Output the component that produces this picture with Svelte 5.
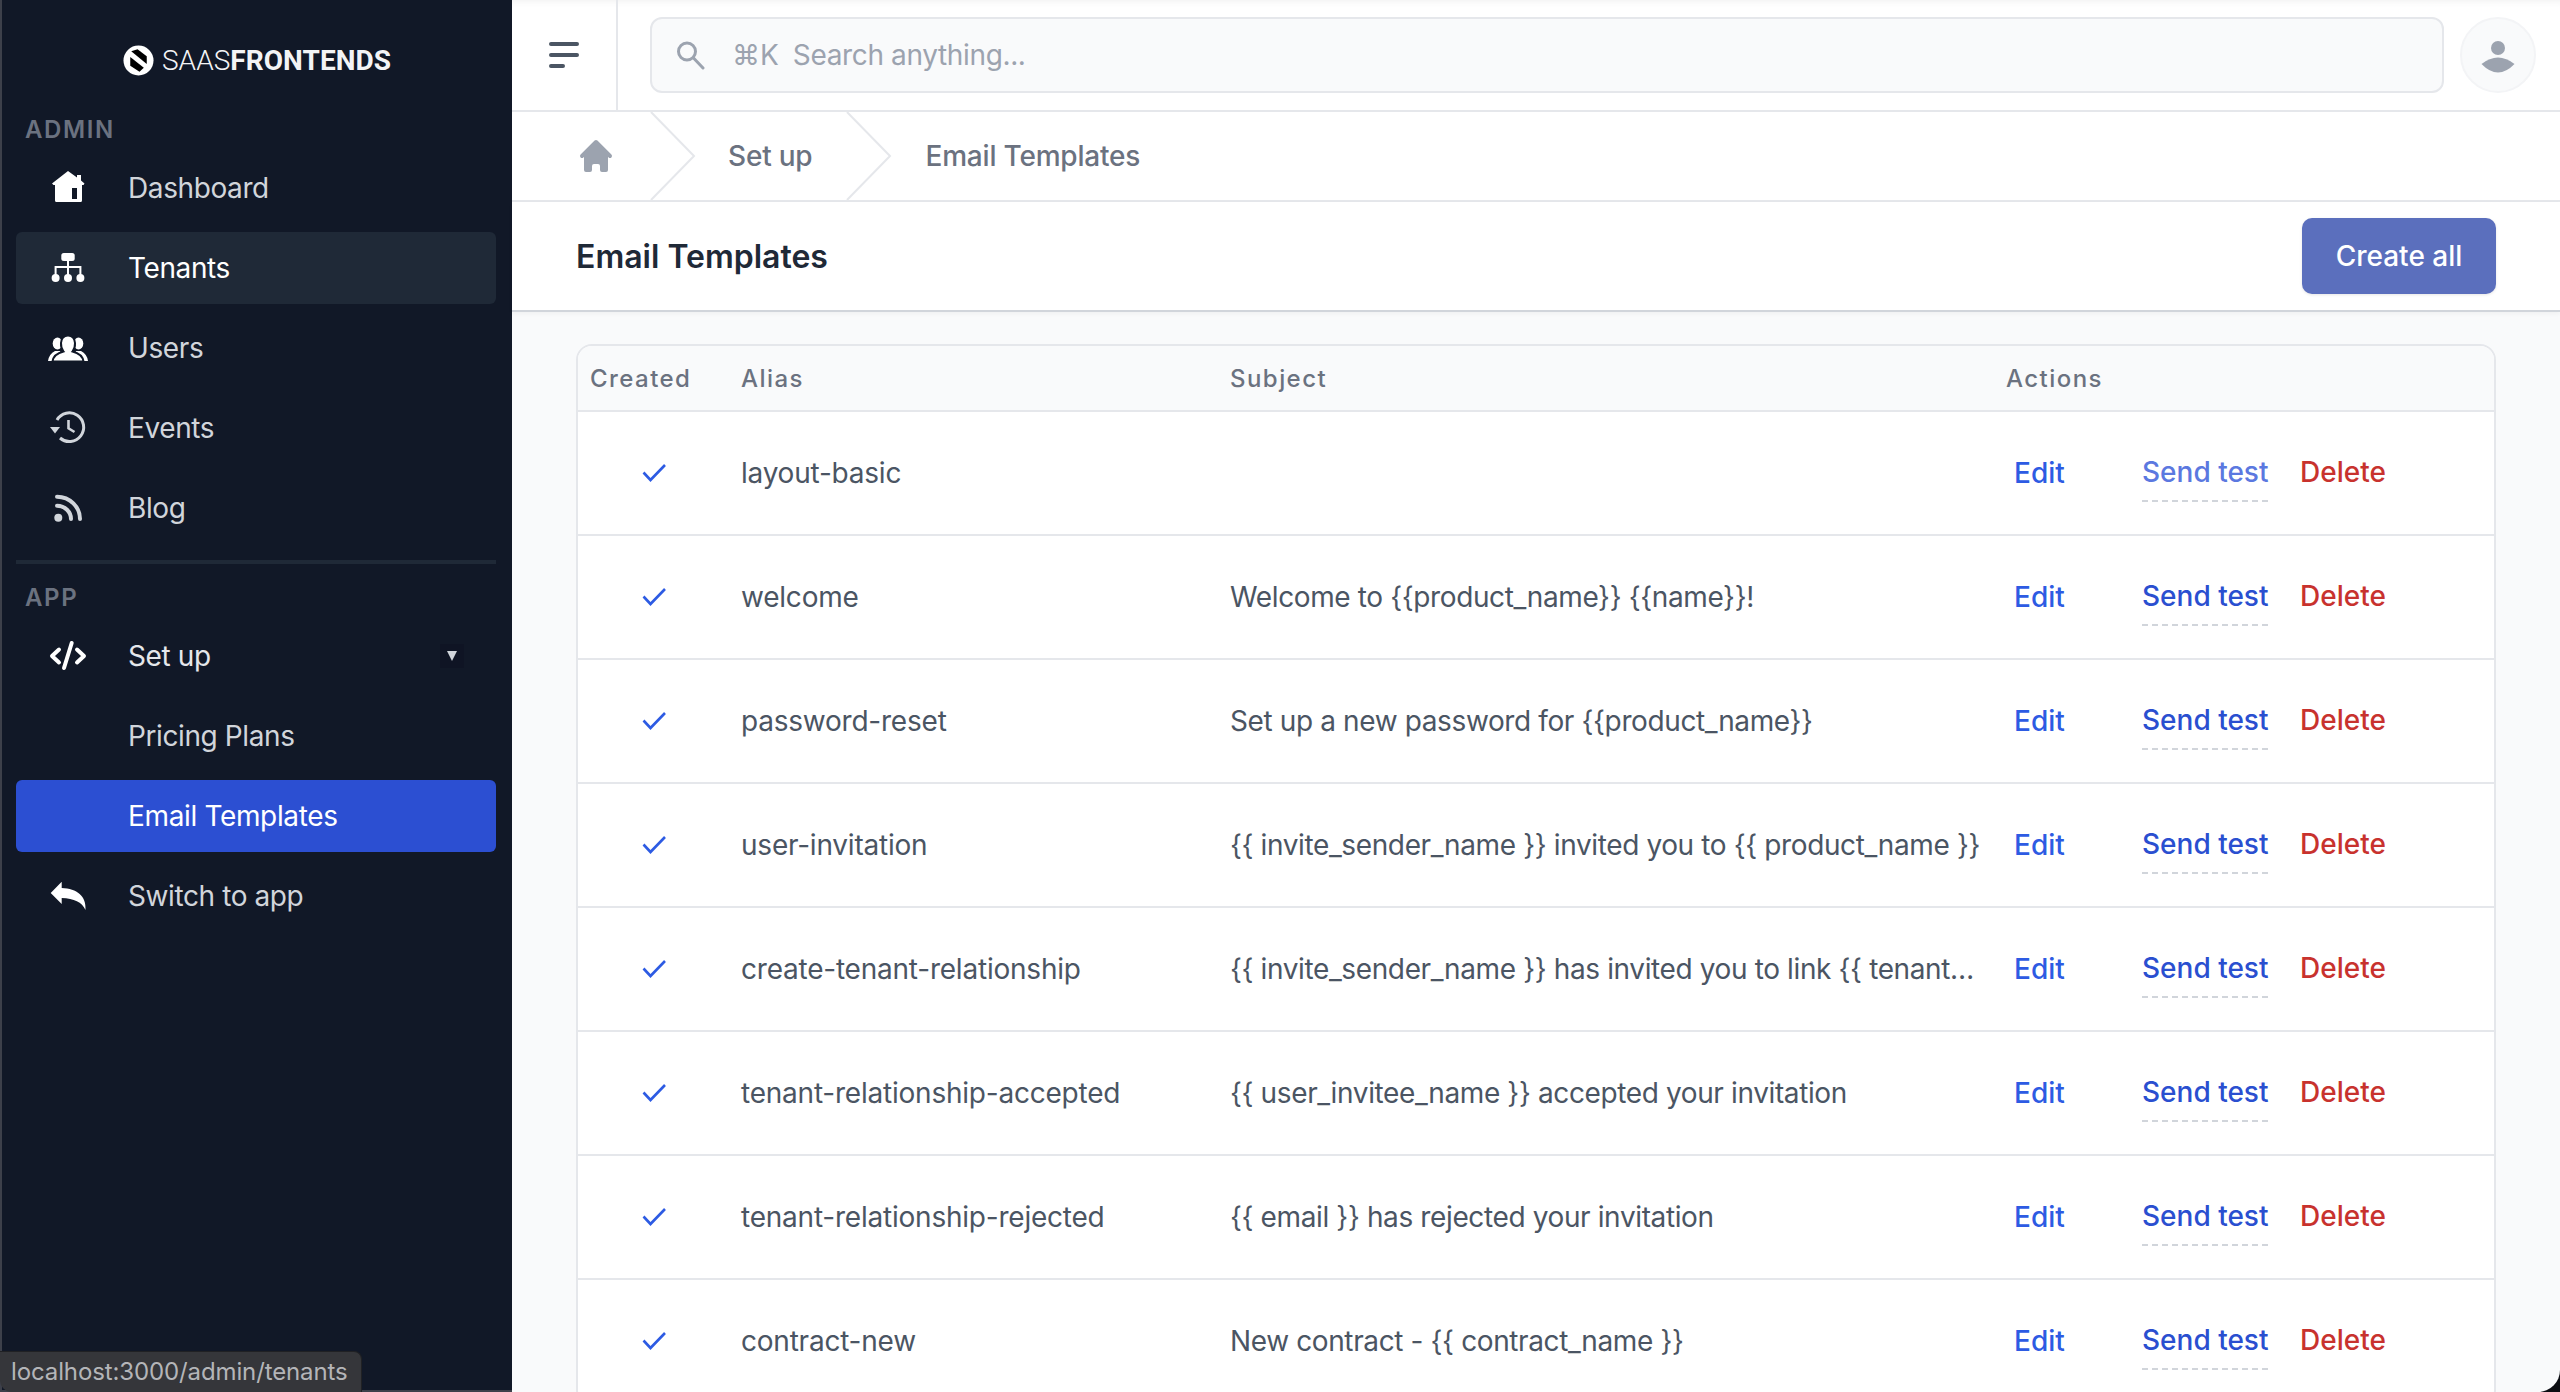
<script>
  // Email templates admin page: dark sidebar, search header, breadcrumb, table.
  const templates = [
    { alias: 'layout-basic', subject: '' },
    { alias: 'welcome', subject: 'Welcome to {{product_name}} {{name}}!' },
    { alias: 'password-reset', subject: 'Set up a new password for {{product_name}}' },
    { alias: 'user-invitation', subject: '{{ invite_sender_name }} invited you to {{ product_name }}' },
    { alias: 'create-tenant-relationship', subject: '{{ invite_sender_name }} has invited you to link {{ tenant…' },
    { alias: 'tenant-relationship-accepted', subject: '{{ user_invitee_name }} accepted your invitation' },
    { alias: 'tenant-relationship-rejected', subject: '{{ email }} has rejected your invitation' },
    { alias: 'contract-new', subject: 'New contract - {{ contract_name }}' }
  ]
</script>

<div class="window">
  <aside class="sidebar">
    <div class="brand">
      <svg class="logo" viewBox="0 0 32 32" width="31" height="31">
        <circle cx="16" cy="16" r="15.5" fill="#fff" />
        <path d="M8.5 6.5 L15 4.5 L24.5 11.5 L24.5 19.5 Z" fill="#000" />
        <path d="M7.5 12.5 L21.5 23.5 L17 27.5 L7.5 21.5 Z" fill="#000" />
      </svg>
      <span class="wordmark"><span class="thin">SAAS</span><b>FRONTENDS</b></span>
    </div>

    <div class="section">ADMIN</div>
    <nav class="menu">
      <a class="item">
        <svg class="ico" viewBox="0 0 40 40" fill="#fff">
          <path fill-rule="evenodd" d="M20 3 L29 9.5 V7 H33 V12.5 L36.5 15.5 L35.5 17 H34 V32.5 Q34 34 32.5 34 H8.5 Q7 34 7 32.5 V17 H5.5 L4 15.5 Z M24 20 V31 H29 V20 Z" />
        </svg>
        Dashboard
      </a>
      <a class="item current">
        <svg class="ico" viewBox="0 0 40 40" fill="#fff">
          <rect x="13.3" y="5" width="13.4" height="8" rx="2.5" />
          <path d="M20 13 V27 M7.6 27 V19 H32.4 V27" fill="none" stroke="#fff" stroke-width="2" />
          <circle cx="7.6" cy="30" r="4" />
          <circle cx="20" cy="30" r="4" />
          <circle cx="32.4" cy="30" r="4" />
        </svg>
        Tenants
      </a>
      <a class="item">
        <svg class="ico" viewBox="0 0 40 40" fill="#fff">
          <ellipse cx="9.5" cy="15.5" rx="4.8" ry="6" />
          <ellipse cx="30.5" cy="15.5" rx="4.8" ry="6" />
          <path d="M0 33 Q1 26 7 23 H12 L16 33 Z M40 33 Q39 26 33 23 H28 L24 33 Z" />
          <path d="M4.5 33.5 Q5.5 26 15.5 23.5 Q12.7 20 13 15 Q13.5 7.5 20 7.5 Q26.5 7.5 27 15 Q27.3 20 24.5 23.5 Q34.5 26 35.5 33.5 Z" stroke="#111827" stroke-width="2" />
        </svg>
        Users
      </a>
      <a class="item">
        <svg class="ico" viewBox="0 0 40 40" fill="none" stroke="#d1d5db" stroke-width="3">
          <path d="M9 12 A14.3 14.3 0 1 1 12 30" />
          <path d="M2 19 H12 L7 25.5 Z" fill="#d1d5db" stroke="none" />
          <path d="M20.5 12 V20.3 L26.5 24" stroke-width="2.6" />
        </svg>
        Events
      </a>
      <a class="item">
        <svg class="ico" viewBox="0 0 40 40" fill="none" stroke="#d1d5db" stroke-width="4" stroke-linecap="round">
          <path d="M9 8.7 C22 8.7 32 19 32 31" />
          <path d="M9 17.8 C17 17.8 23 24 23 31" />
          <circle cx="10.3" cy="29.7" r="4" fill="#d1d5db" stroke="none" />
        </svg>
        Blog
      </a>
    </nav>

    <div class="rule"></div>

    <div class="section app">APP</div>
    <nav class="menu">
      <a class="item open">
        <svg class="ico" viewBox="0 0 40 40" fill="none" stroke="#fff" stroke-width="4" stroke-linecap="round" stroke-linejoin="round">
          <path d="M11 13.5 L4 20 L11 26.5 M29 13.5 L36 20 L29 26.5 M23.7 7 L16 32" />
        </svg>
        Set up
        <span class="caret"><i></i></span>
      </a>
      <a class="item">Pricing Plans</a>
      <a class="item active">Email Templates</a>
      <a class="item">
        <svg class="ico" viewBox="0 0 40 40" fill="#fff">
          <path d="M2.7 17 L13.7 5.7 V12 C29 12.5 38.5 20 37.5 34 C34 26 26 22.5 13.7 22 V28 Z" />
        </svg>
        Switch to app
      </a>
    </nav>
  </aside>

  <main class="main">
    <header class="topbar">
      <button class="burger" aria-label="Menu">
        <svg viewBox="0 0 30 26" width="30" height="26" fill="none" stroke="#4b5563" stroke-width="4" stroke-linecap="round">
          <path d="M2 2 H28 M2 13 H28 M2 24 H14" />
        </svg>
      </button>
      <div class="search">
        <svg viewBox="0 0 30 30" width="30" height="30" fill="none" stroke="#9ca3af" stroke-width="3" stroke-linecap="round">
          <circle cx="11" cy="11.5" r="8.5" />
          <path d="M17.5 18 L27 28" />
        </svg>
        <span class="kbd">⌘K</span>
        <span class="hint">Search anything...</span>
      </div>
      <div class="avatar">
        <svg viewBox="0 0 40 44" width="40" height="44" fill="#9ca3af">
          <circle cx="20" cy="15" r="7" />
          <path d="M3.5 31 Q20 18 36.5 31 Q20 48 3.5 31 Z" />
        </svg>
      </div>
    </header>

    <div class="crumbs">
      <svg class="home" viewBox="0 0 20 20" width="40" height="40" fill="#9ca3af">
        <path d="M10.707 2.293a1 1 0 00-1.414 0l-7 7a1 1 0 001.414 1.414L4 10.414V17a1 1 0 001 1h2a1 1 0 001-1v-2a1 1 0 011-1h2a1 1 0 011 1v2a1 1 0 001 1h2a1 1 0 001-1v-6.586l.293.293a1 1 0 001.414-1.414l-7-7z" />
      </svg>
      <svg class="chev" viewBox="0 0 46 88" width="46" height="88" fill="none" stroke="#e5e7eb" stroke-width="2"><path d="M1 0 L44 44 L1 88" /></svg>
      <span>Set up</span>
      <svg class="chev" viewBox="0 0 46 88" width="46" height="88" fill="none" stroke="#e5e7eb" stroke-width="2"><path d="M1 0 L44 44 L1 88" /></svg>
      <span class="last">Email Templates</span>
    </div>

    <div class="titlebar">
      <h1>Email Templates</h1>
      <button class="create">Create all</button>
    </div>

    <section class="content">
      <div class="card">
        <table>
          <colgroup>
            <col style="width:151px" />
            <col style="width:489px" />
            <col style="width:776px" />
            <col />
          </colgroup>
          <thead>
            <tr>
              <th>Created</th>
              <th>Alias</th>
              <th>Subject</th>
              <th>Actions</th>
            </tr>
          </thead>
          <tbody>
            {#each templates as t, i}
              <tr>
                <td class="created">
                  <svg viewBox="0 0 24 18" width="24" height="18" fill="none" stroke="#2d5be3" stroke-width="2.6">
                    <path d="M1.5 8.5 L8.5 16 L23 1" />
                  </svg>
                </td>
                <td>{t.alias}</td>
                <td class="subject">{t.subject}</td>
                <td>
                  <div class="actions">
                    <a class="edit">Edit</a>
                    <a class="send" class:hover={i === 0}>Send test</a>
                    <a class="delete">Delete</a>
                  </div>
                </td>
              </tr>
            {/each}
          </tbody>
        </table>
      </div>
    </section>
  </main>

  <div class="status">localhost:3000/admin/tenants</div>
</div>

<style>
  :global(body) {
    margin: 0;
    background: #0b0d12;
    font-family: Inter, "Liberation Sans", sans-serif;
  }
  .window {
    position: relative;
    display: flex;
    height: 100vh;
    overflow: hidden;
    border-bottom-right-radius: 22px;
    background: #f9fafb;
  }

  .sidebar {
    box-sizing: border-box;
    flex: 0 0 512px;
    background: #111827;
    border-left: 2px solid #3d404a;
    border-bottom: 2px solid #3d404a;
    color: #d1d5db;
    font-size: 28px;
  }
  .brand {
    height: 120px;
    display: flex;
    align-items: center;
    justify-content: center;
    gap: 8px;
    color: #f3f4f6;
  }
  .logo { flex: none; }
  .wordmark {
    font-family: Roboto, sans-serif;
    font-size: 28px;
    letter-spacing: 0.05px;
  }
  .thin { font-weight: 300; }
  .wordmark b { font-weight: 700; }
  .section {
    position: relative;
    top: 2px;
    margin-left: 23px;
    height: 16px;
    line-height: 16px;
    font-size: 24px;
    font-weight: 600;
    letter-spacing: 1.6px;
    color: #6b7280;
  }
  .section.app { margin-top: 24px; }
  .menu {
    display: flex;
    flex-direction: column;
    gap: 8px;
    margin: 16px 16px 0 14px;
  }
  .item {
    position: relative;
    display: flex;
    align-items: center;
    height: 72px;
    padding-left: 112px;
    border-radius: 6px;
    line-height: 1;
    letter-spacing: -0.4px;
  }
  .ico {
    position: absolute;
    left: 32px;
    top: 16px;
    width: 40px;
    height: 40px;
  }
  .item.current { background: #1f2937; color: #fff; }
  .item.active { background: #2c4fd2; color: #fff; letter-spacing: -0.35px; }
  .item.open { color: #e5e7eb; }
  .caret {
    position: absolute;
    left: 424px;
    top: 24px;
    display: grid;
    place-items: center;
    width: 24px;
    height: 24px;
    background: #0f1424;
  }
  .caret i {
    width: 0;
    height: 0;
    border-left: 5px solid transparent;
    border-right: 5px solid transparent;
    border-top: 10px solid #d1d5db;
  }
  .rule {
    height: 4px;
    margin: 16px 16px 0 14px;
    background: #1f2937;
  }

  .main {
    flex: 1;
    min-width: 0;
    display: flex;
    flex-direction: column;
  }
  .topbar {
    box-sizing: border-box;
    height: 112px;
    flex: none;
    display: flex;
    align-items: stretch;
    background: #fff;
    border-bottom: 2px solid #e5e7eb;
    box-shadow: inset 0 8px 8px -8px rgba(0, 0, 0, 0.08);
  }
  .burger {
    width: 106px;
    flex: none;
    padding: 0;
    border: 0;
    border-right: 2px solid #e5e7eb;
    background: none;
    display: grid;
    place-items: center;
  }
  .search {
    box-sizing: border-box;
    flex: 1;
    margin: 17px 16px 17px 32px;
    padding-left: 24px;
    display: flex;
    align-items: center;
    background: #f9fafb;
    border: 2px solid #e5e7eb;
    border-radius: 12px;
    color: #9ca3af;
    font-size: 28px;
  }
  .kbd { margin-left: 26px; margin-right: 14px; }
  .hint { letter-spacing: -0.36px; }
  .avatar {
    box-sizing: border-box;
    flex: none;
    width: 76px;
    height: 76px;
    margin: 17px 24px 0 0;
    display: grid;
    place-items: center;
    border-radius: 50%;
    background: #f9fafb;
    border: 2px solid #f3f4f6;
  }
  .crumbs {
    box-sizing: border-box;
    height: 90px;
    flex: none;
    display: flex;
    align-items: center;
    padding-left: 64px;
    background: #fff;
    border-bottom: 2px solid #e5e7eb;
    color: #6b7280;
    font-size: 28px;
    font-weight: 500;
  }
  .chev { flex: none; }
  .home { margin-right: 34px; }
  .crumbs span { margin: 0 34px 0 32px; letter-spacing: -0.2px; }
  .crumbs span.last { margin-left: 33px; }
  .titlebar {
    box-sizing: border-box;
    height: 110px;
    flex: none;
    display: flex;
    align-items: center;
    justify-content: space-between;
    padding: 0 64px;
    background: #fff;
    border-bottom: 2px solid #d1d5db;
    box-shadow: 0 2px 4px rgba(0, 0, 0, 0.04);
  }
  h1 {
    margin: 0;
    font-size: 32px;
    font-weight: 600;
    color: #1f2937;
  }
  .create {
    width: 194px;
    height: 76px;
    border: 0;
    border-radius: 10px;
    background: #5b6fbd;
    color: #fff;
    font: 500 28px Inter, sans-serif;
    box-shadow: 0 1px 3px rgba(0, 0, 0, 0.1);
  }

  .content { padding: 32px 64px 0; }
  .card {
    border: 2px solid #e5e7eb;
    border-radius: 16px;
    overflow: hidden;
    background: #fff;
  }
  table {
    width: 100%;
    table-layout: fixed;
    border-collapse: separate;
    border-spacing: 0;
  }
  th {
    box-sizing: border-box;
    height: 66px;
    padding: 0 12px;
    text-align: left;
    background: #f9fafb;
    border-bottom: 2px solid #e5e7eb;
    color: #6b7280;
    font-size: 24px;
    font-weight: 500;
    letter-spacing: 1.45px;
  }
  td {
    box-sizing: border-box;
    height: 124px;
    padding: 0 12px;
    border-bottom: 2px solid #e5e7eb;
    color: #4b5563;
    font-size: 28px;
    letter-spacing: -0.22px;
  }
  .created { padding-left: 64px; line-height: 0; }
  .subject {
    white-space: nowrap;
    letter-spacing: -0.38px;
  }
  .actions {
    display: grid;
    grid-template-columns: 127px 159px auto;
    margin-left: 8px;
    font-weight: 500;
    letter-spacing: 0;
  }
  .edit { color: #2d5be3; }
  .send {
    justify-self: start;
    margin: -1px 0 -12px 1px;
    color: #2a4fd0;
    padding-bottom: 11px;
    border-bottom: 2px dashed #d1d5db;
  }
  .send.hover { color: #5b78e0; }
  .delete { margin-top: -1px; color: #c8322e; }

  .status {
    position: absolute;
    left: 0;
    bottom: 0;
    box-sizing: border-box;
    width: 362px;
    height: 41px;
    padding-left: 11px;
    line-height: 40px;
    background: #35363a;
    border: 1px solid #202124;
    border-left: 0;
    border-bottom: 0;
    border-radius: 0 8px 0 12px;
    color: #b4b5b8;
    font-size: 24px;
    letter-spacing: -0.12px;
    white-space: nowrap;
  }
</style>
